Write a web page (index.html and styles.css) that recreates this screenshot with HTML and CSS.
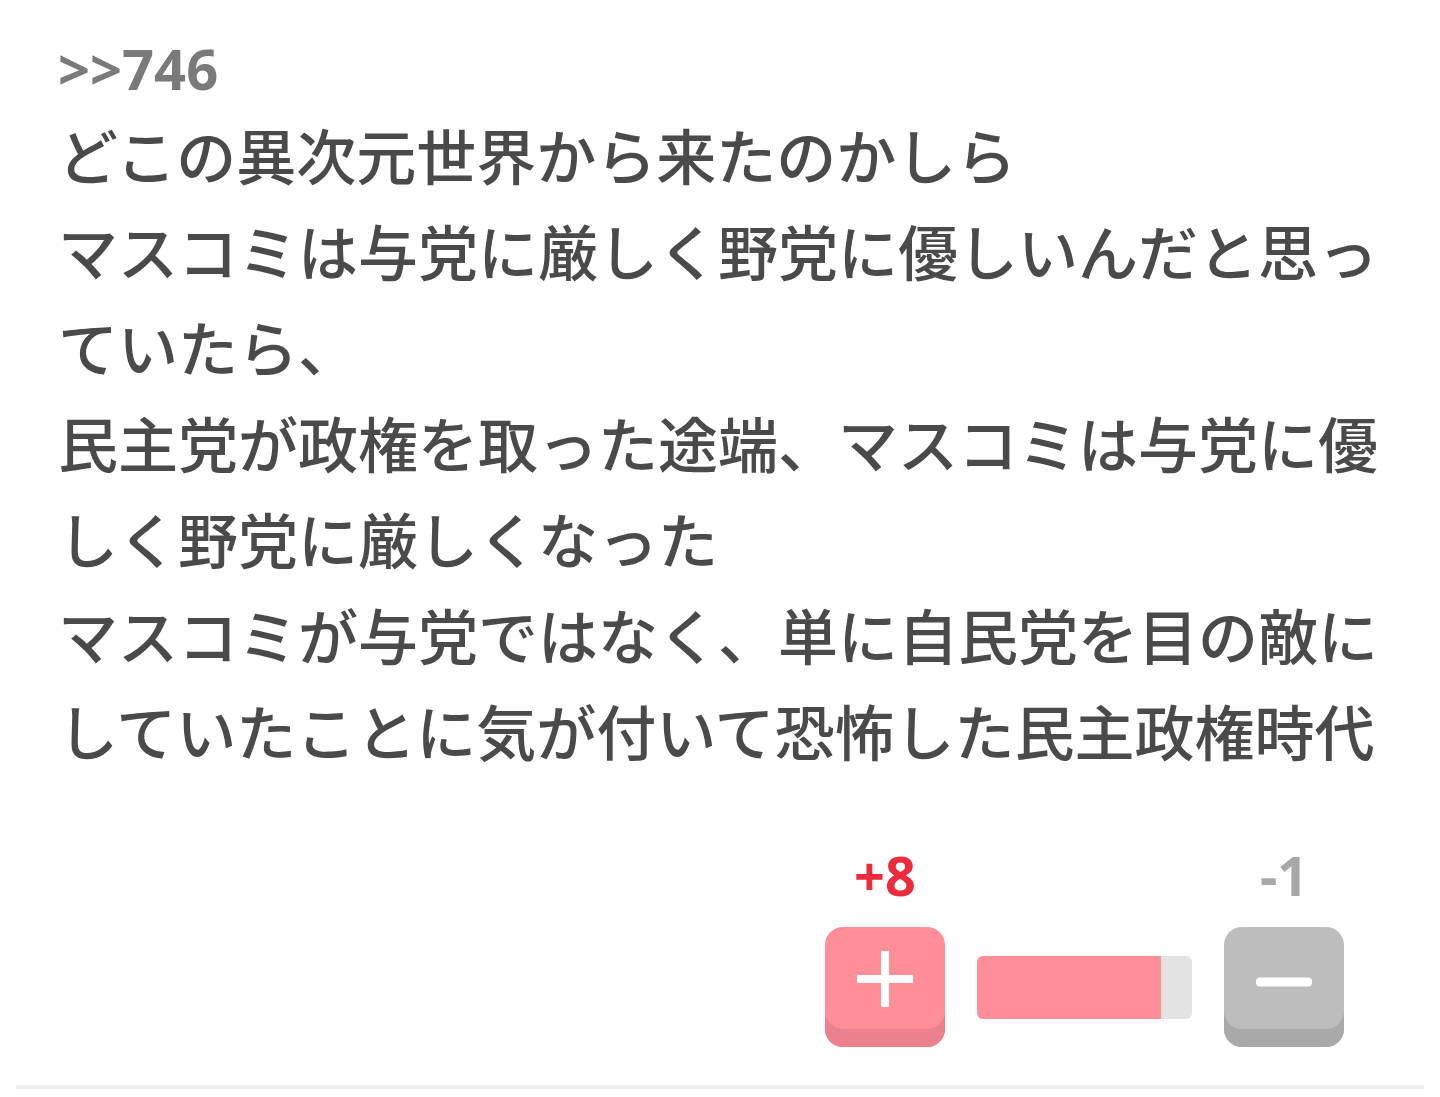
FILE: index.html
```html
<!DOCTYPE html>
<html lang="ja">
<head>
<meta charset="utf-8">
<title>コメント</title>
<link rel="stylesheet" href="styles.css">
</head>
<body>
<article class="post">
  <div class="anchor">&gt;&gt;746</div>
  <p class="body">どこの異次元世界から来たのかしら<br>マスコミは与党に厳しく野党に優しいんだと思っていたら、<br>民主党が政権を取った途端、マスコミは与党に優しく野党に厳しくなった<br>マスコミが与党ではなく、単に自民党を目の敵にしていたことに気が付いて恐怖した民主政権時代</p>
  <div class="votes">
    <span class="count count-plus">+8</span>
    <span class="count-gap"></span>
    <span class="count count-minus">-1</span>
    <button class="btn btn-plus" type="button" aria-label="プラス">
      <svg width="56" height="56" viewBox="0 0 56 56"><path d="M28 2v52M2 28h52" stroke="#fff" stroke-width="8" stroke-linecap="round" fill="none"/></svg>
    </button>
    <div class="bar"><div class="fill" style="width:85.6%"></div></div>
    <button class="btn btn-minus" type="button" aria-label="マイナス">
      <svg width="56" height="12" viewBox="0 0 56 12"><path d="M4 6h48" stroke="#fff" stroke-width="9" stroke-linecap="round" fill="none"/></svg>
    </button>
  </div>
</article>
<hr class="divider">
</body>
</html>
```
FILE: styles.css
```css
html, body {
  margin: 0;
  padding: 0;
  background: #fff;
}

body {
  font-family: "Noto Sans CJK JP", "Noto Sans", sans-serif;
  color: #4a4a4a;
}

.post {
  padding: 30px 58px 0 58px;
}

.anchor {
  font-family: "Noto Sans", "Noto Sans CJK JP", sans-serif;
  font-weight: 700;
  font-size: 56px;
  line-height: 76px;
  color: #7a7a7a;
}

.body {
  margin: 0;
  font-size: 60px;
  font-weight: 500;
  line-height: 96px;
  letter-spacing: 0;
}

.votes {
  display: grid;
  grid-template-columns: 120px 215px 120px;
  grid-template-rows: auto auto;
  column-gap: 32px;
  row-gap: 23px;
  justify-content: end;
  align-items: center;
  margin-top: 68px;
  margin-right: 38px;
}

.count {
  justify-self: center;
  font-family: "Noto Sans", "Noto Sans CJK JP", sans-serif;
  font-weight: 700;
  font-size: 54px;
  line-height: 58px;
}

.count-plus {
  color: #ee2b3c;
}

.count-minus {
  color: #a8a8a8;
}

.btn {
  width: 120px;
  height: 120px;
  border: 0;
  padding: 0 0 16px 0;
  border-radius: 18px;
  display: flex;
  align-items: center;
  justify-content: center;
  cursor: pointer;
}

.btn-plus {
  background: #ff8e99;
  box-shadow: inset 0 -18px 0 #ea818c;
}

.btn-minus {
  background: #bdbdbd;
  box-shadow: inset 0 -18px 0 #a9a9a9;
  padding-top: 6px;
}

.bar {
  height: 63px;
  background: #e3e3e3;
  border-radius: 6px;
  overflow: hidden;
}

.fill {
  height: 100%;
  background: #ff8e99;
}

.divider {
  margin: 38px 16px 0 16px;
  border: 0;
  height: 4px;
  background: #efefef;
}
```
